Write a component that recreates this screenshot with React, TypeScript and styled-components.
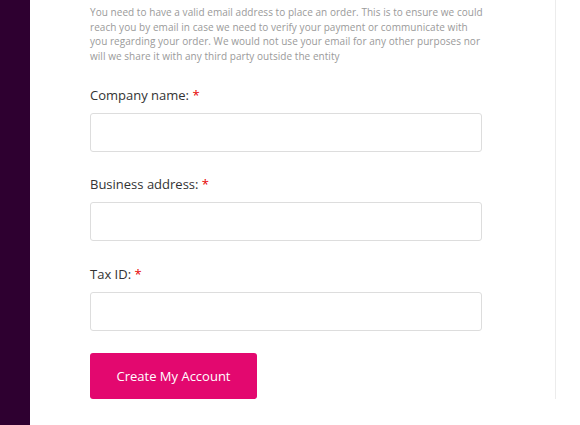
import React from 'react';
import styled, { createGlobalStyle } from 'styled-components';

const GlobalStyle = createGlobalStyle`
  html, body {
    margin: 0;
    padding: 0;
    background: #ffffff;
    font-family: "Open Sans", "Liberation Sans", sans-serif;
  }
`;

type Field = {
    label: string
    name: string
}

const fields: Field[] = [
    { label: 'Company name:', name: 'company' },
    { label: 'Business address:', name: 'address' },
    { label: 'Tax ID:', name: 'taxId' },
];

const App = () => {
    return (
        <>
            <GlobalStyle />
            <Page>
                <Sidebar />
                <Panel>
                    <Notice>
                        You need to have a valid email address to place an order. This is to ensure we could
                        reach you by email in case we need to verify your payment or communicate with
                        you regarding your order. We would not use your email for any other purposes nor
                        will we share it with any third party outside the entity
                    </Notice>
                    {fields.map(f => (
                        <FieldRow key={f.name}>
                            <Label htmlFor={f.name}>
                                {f.label} <Required>*</Required>
                            </Label>
                            <Input id={f.name} type="text" />
                        </FieldRow>
                    ))}
                    <SubmitButton type="button">Create My Account</SubmitButton>
                </Panel>
            </Page>
        </>
    );
};

export default App;

const Page = styled.div`
  display: flex;
  width: 580px;
  height: 425px;
  overflow: hidden;
`

const Sidebar = styled.div`
  width: 30px;
  flex-shrink: 0;
  background-color: #2e0030;
`

const Panel = styled.div`
  width: 465px;
  align-self: flex-start;
  padding: 5px 0 0 60px;
  border-right: 1px solid #ececec;
  display: flex;
  flex-direction: column;
  align-items: flex-start;
`

const Notice = styled.p`
  margin: 0 0 21.5px;
  width: 394px;
  font-size: 10px;
  letter-spacing: 0.05px;
  line-height: 14.5px;
  color: #9a9a9a;
`

const FieldRow = styled.div`
  display: flex;
  flex-direction: column;
  margin-bottom: 22.5px;
`

const Label = styled.label`
  font-size: 13px;
  line-height: 20px;
  color: #333333;
  margin-bottom: 8px;
`

const Required = styled.span`
  color: #e60000;
`

const Input = styled.input`
  box-sizing: border-box;
  width: 392px;
  height: 39px;
  border: 1px solid #dddddd;
  border-radius: 3px;
  padding: 0 10px;
  font-family: inherit;
  font-size: 13px;
  outline: none;
`

const SubmitButton = styled.button`
  width: 167px;
  height: 46px;
  border: none;
  border-radius: 3px;
  background-color: #e3086f;
  color: #ffffff;
  font-family: "Open Sans", "Liberation Sans", sans-serif;
  font-size: 13px;
  cursor: pointer;
`
